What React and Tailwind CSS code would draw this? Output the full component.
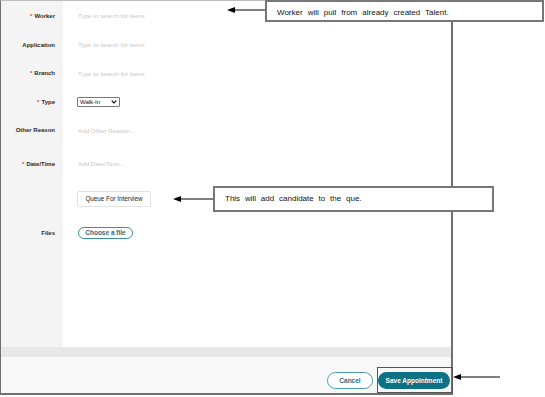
import React from "react";

const Req = () => <span className="text-[#e0405a] mr-[2px]">*</span>;

function Row({ h, label, req, children, pl = "pl-[15px]" }) {
  return (
    <div className={`flex ${h}`}>
      <div className="w-[62px] bg-[#f4f4f4] flex items-center justify-end pr-[8px] text-[6px] font-bold text-[#2a2a2a] whitespace-nowrap">
        {req && <Req />}
        {label}
      </div>
      <div className={`flex-1 flex items-center ${pl}`}>{children}</div>
    </div>
  );
}

const Ph = ({ children }) => (
  <span className="text-[6.25px] text-[#c9c9c9]">{children}</span>
);

function Arrow({ className, w }) {
  return (
    <svg className={className} width={w} height="8" viewBox={`0 0 ${w} 8`}>
      <polygon points="0,4 8,1 8,7" fill="#000" />
      <line x1="7" y1="4" x2={w} y2="4" stroke="#000" strokeWidth="1" />
    </svg>
  );
}

export default function App() {
  return (
    <div className="relative w-[545px] h-[397px] bg-white overflow-hidden font-['Liberation_Sans',Arial,sans-serif]">
      <div className="flex flex-col w-[453px] h-[395px] border-l border-r-2 border-b-2 border-t border-[#707070] border-t-[#bdbdbd]">
        <div className="flex flex-col flex-1">
          <Row h="h-[30px]" label="Worker" req>
            <Ph>Type to search for items</Ph>
          </Row>
          <Row h="h-[28px]" label="Application">
            <Ph>Type to search for items</Ph>
          </Row>
          <Row h="h-[29px]" label="Branch" req>
            <Ph>Type to search for items</Ph>
          </Row>
          <Row h="h-[28px]" label="Type" req pl="pl-[14px]">
            <div className="w-[43px] h-[10px] border border-[#777] rounded-[1px] flex items-center justify-between px-[2px] text-[6px] text-[#111]">
              <span>Walk-In</span>
              <svg width="6" height="4" viewBox="0 0 6 4">
                <polyline points="0.7,0.7 3,3 5.3,0.7" fill="none" stroke="#111" strokeWidth="1.2" />
              </svg>
            </div>
          </Row>
          <Row h="h-[29px]" label="Other Reason">
            <Ph>Add Other Reason...</Ph>
          </Row>
          <Row h="h-[38px]" label="Date/Time" req>
            <Ph>Add Date/Time...</Ph>
          </Row>
          <Row h="h-[32px]" label="" pl="pl-[14px]">
            <div className="w-[74px] h-[16px] border border-[#e2e2e2] rounded-[2px] flex items-center justify-center text-[6.3px] text-[#222]">
              Queue For Interview
            </div>
          </Row>
          <Row h="h-[36px]" label="Files">
            <div className="w-[55px] h-[12px] border border-[#3f8f9c] rounded-full flex items-center justify-center text-[6.5px] font-bold text-[#2b6d7a]">
              Choose a file
            </div>
          </Row>
          <div className="flex flex-1">
            <div className="w-[62px] bg-[#f4f4f4]" />
          </div>
        </div>
        <div className="h-[10px] bg-[#e8e8e8]" />
        <div className="h-[36px] bg-[#f8f8f8] flex items-start justify-end gap-[5px] pt-[15px] pr-[1px]">
          <div className="w-[46px] h-[17px] border border-[#4a9aa8] rounded-full bg-white flex items-center justify-center text-[6.5px] font-bold text-[#2b6d7a]">
            Cancel
          </div>
          <div className="w-[72px] h-[17px] rounded-full bg-[#0d7384] flex items-center justify-center text-[6.5px] font-bold text-white">
            Save Appointment
          </div>
        </div>
      </div>

      {/* Annotation 1 */}
      <div className="absolute left-[265px] top-0 w-[279px] h-[22px] border-2 border-[#777] bg-white flex items-center pl-[10px] pt-[4px] text-[8px] text-[#111] [word-spacing:2.8px]">
        Worker will pull from already created Talent.
      </div>
      <Arrow className="absolute left-[227px] top-[6px]" w={38} />

      {/* Annotation 2 */}
      <div className="absolute left-[213px] top-[186px] w-[281px] h-[26px] border-2 border-[#777] bg-white flex items-center pl-[10px] text-[8px] text-[#111] [word-spacing:2.6px]">
        This will add candidate to the que.
      </div>
      <Arrow className="absolute left-[173px] top-[195px]" w={40} />

      {/* Annotation 3 */}
      <div className="absolute left-[377px] top-[367px] w-[76px] h-[26px] border border-[#555]" />
      <Arrow className="absolute left-[453px] top-[373px]" w={47} />
    </div>
  );
}
